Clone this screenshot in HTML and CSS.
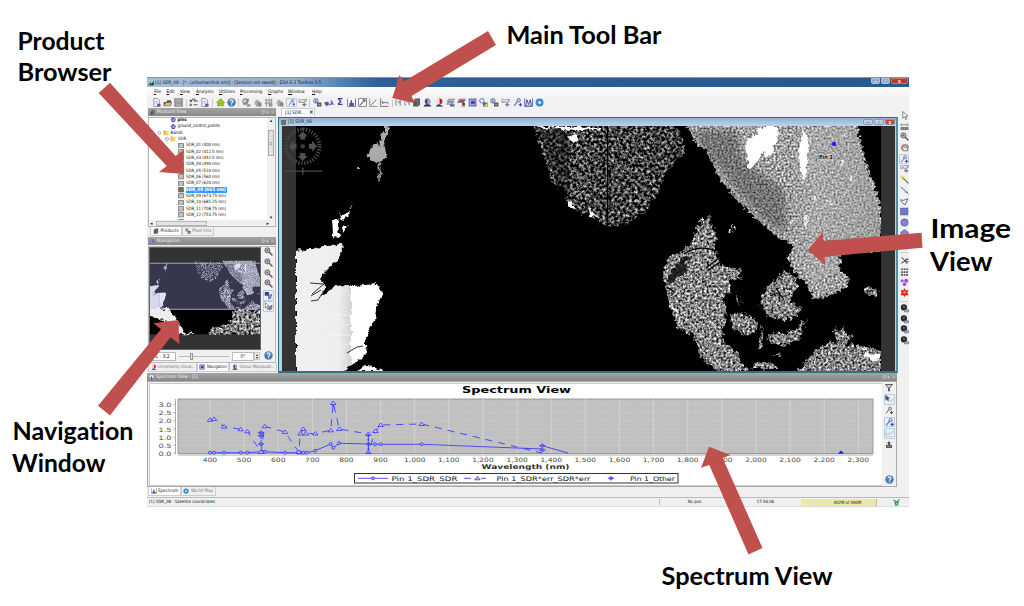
FILE: index.html
```html
<!DOCTYPE html>
<html lang="en">
<head>
<meta charset="utf-8">
<title>ESA S-3 Toolbox overview</title>
<link rel="stylesheet" href="styles.css">
</head>
<body>
<svg class="defs" aria-hidden="true">
  <defs>
    <filter id="speckle" x="0" y="0" width="100%" height="100%" color-interpolation-filters="sRGB">
      <feTurbulence type="fractalNoise" baseFrequency=".42" numOctaves="2" seed="4" result="n"/>
      <feColorMatrix in="n" values="1.7 0 0 0 -.33  1.7 0 0 0 -.33  1.7 0 0 0 -.33  0 0 0 0 1" result="g"/>
      <feTurbulence type="fractalNoise" baseFrequency=".22" numOctaves="3" seed="9" result="d"/>
      <feDisplacementMap in="SourceGraphic" in2="d" scale="9" xChannelSelector="R" yChannelSelector="G" result="s"/>
      <feComposite in="g" in2="s" operator="in"/>
    </filter>
    <filter id="bright" x="0" y="0" width="100%" height="100%" color-interpolation-filters="sRGB">
      <feTurbulence type="fractalNoise" baseFrequency=".5" numOctaves="2" seed="12" result="n"/>
      <feColorMatrix in="n" values="1.3 0 0 0 -.02  1.3 0 0 0 -.02  1.3 0 0 0 -.02  0 0 0 0 1" result="g"/>
      <feTurbulence type="fractalNoise" baseFrequency=".25" numOctaves="3" seed="5" result="d"/>
      <feDisplacementMap in="SourceGraphic" in2="d" scale="8" xChannelSelector="R" yChannelSelector="G" result="s"/>
      <feComposite in="g" in2="s" operator="in"/>
    </filter>
    <filter id="dim" x="0" y="0" width="100%" height="100%" color-interpolation-filters="sRGB">
      <feTurbulence type="fractalNoise" baseFrequency=".34" numOctaves="3" seed="21" result="n"/>
      <feColorMatrix in="n" values="1.9 0 0 0 -.7  1.9 0 0 0 -.7  1.9 0 0 0 -.7  0 0 0 0 1" result="g"/>
      <feTurbulence type="fractalNoise" baseFrequency=".2" numOctaves="3" seed="7" result="d"/>
      <feDisplacementMap in="SourceGraphic" in2="d" scale="9" xChannelSelector="R" yChannelSelector="G" result="s"/>
      <feComposite in="g" in2="s" operator="in"/>
    </filter>
    <filter id="rough" x="-5%" y="-5%" width="110%" height="110%">
      <feTurbulence type="fractalNoise" baseFrequency=".2" numOctaves="3" seed="3" result="d"/>
      <feDisplacementMap in="SourceGraphic" in2="d" scale="6" xChannelSelector="R" yChannelSelector="G"/>
    </filter>
    <filter id="soft" x="-20%" y="-20%" width="140%" height="140%"><feGaussianBlur stdDeviation="3"/></filter>
    <linearGradient id="ukFill"><stop offset="0" stop-color="#f0f0f0"/><stop offset=".5" stop-color="#eee"/><stop offset=".64" stop-color="#d4d4d4"/><stop offset=".645" stop-color="#fff"/><stop offset="1" stop-color="#fff"/></linearGradient>
    <linearGradient id="eastFade" x1="0" x2="1" y1="0" y2="0"><stop offset="0" stop-color="#999" stop-opacity="0"/><stop offset=".3" stop-color="#bbb" stop-opacity=".35"/><stop offset="1" stop-color="#999" stop-opacity=".45"/></linearGradient>

    <g id="map">
      <rect x="296" y="126" width="585" height="245" fill="#000"/>
      <g filter="url(#rough)">
        <path fill="url(#ukFill)" d="M296 250l5-1 4 3 2-3 6 0 10-3 7 1 12-5 1 10-8 10-9 8-6 9 6 7-4 11 11-10 19-1 25-2 5 10-4 10-3 17-7 10-3 11 2 10-9 9-11 7-2 5h-49z"/>
        <path fill="#fff" d="M331 220l6-1 2 9-2 3 4 4-1 3-6-1-2-5zM342 228l7-4-6 9zM338 208l3 8 8-4 5-8-5 10-7 7zM358 371l8-6 18 6z"/>
        <path fill="#aaa" d="M367 157l6-14 3 0 2-3 1 9 3-18 3 1 0-7 4 2-2 9-3 6 3 16-4 1-5 5z"/>
        <path fill="#999" d="M378 160l2 0 1 18-2 3z"/>
        <circle cx="358" cy="168" r="1" fill="#ddd"/>
      </g>
      <g fill="none" stroke="#000"><path d="M310 283l14 1-12 10M311 301l7-1 5-8M311 296l10-6M347 353l10-6 6-1" stroke-width=".8"/></g>
      <g stroke="#fff" stroke-width=".6" opacity=".8"><path d="M299 333l14-27M331 315h20M340 325h18M325 335h30M335 344h20"/></g>
      <g filter="url(#dim)">
        <path d="M531 120L541 148 552 182 565 190 566 203 577 212 592 215 602 226 616 227 632 221 646 211 657 195 667 172 677 158 685 152 683 140 672 120z"/>
      </g>
      <path d="M536 127h40l-8 30 2 40-12-12-12-32z" fill="#000" opacity=".35"/>
      <g filter="url(#rough)" fill="#fff"><path d="M537 127h65v4l-6-2-15 1-6 1-10-1-5-2-18 1zM567 138l8-4 3 5-5 3zM568 202l8 4-2 3-6-3zM587 208l5 2 5 7-6-1z"/></g>
      <path d="M607.500 127v98" stroke="#000" stroke-width="1.300"/>
      <path d="M575 152l8 7m-5 22l12-10m-7 24l8-10m-14 8l12-14m-6-26l5 5m35-8l8 12m-5 5l6 7m-20 12l10-11m-5 25l9-5m-13-42l4 11" stroke="#ccc" stroke-width=".6" opacity=".8" fill="none"/>
      <g filter="url(#bright)">
        <path d="M681 116L697 145 707 152 717 175 730 192 747 210 763 225 780 238 794 247 787 258 797 275 810 288 813 299 828 296 847 288 849 278 840 272 841 254 881 252 881 205 873 182 865 158 858 130 857 116z"/>
      </g>
      <path fill="url(#eastFade)" d="M790 127h64l8 31 8 24 8 23v42l-40 6-2 18-26 12-23-38z"/>
      <path d="M692 130l44 0 8 30 40 30 4 40-14 0-30-30-24-32-18-20z" fill="#222" opacity=".35" filter="url(#soft)"/>
      <g filter="url(#rough)" fill="#fff">
        <path d="M754 127h25l-2 14-7 15-5 2-1-9-9 15-7 6 0-10-2-14 2-8 10-4zM803 130l4 4 1 12-2 28-3 7-3-12-1-20z"/>
        <path d="M805 215l3 0-1 14-2-2zM814 195l2 4-2 5zM829 200l4 3-3 2zM840 160l5 2-4 3zM850 175l4 4-5 1zM790 220l3 4-3 1zM842 133l5 2-4 2z" opacity=".8"/>
      </g>
      <g filter="url(#speckle)">
        <path d="M712 213L697 225 693 242 687 248 668 258 663 272 665 288 670 305 677 328 693 335 697 348 703 360 717 371 730 371 747 371 737 353 724 342 722 328 727 315 723 297 730 292 730 280 740 278 741 268 730 268 720 263 715 248 716 232 709 222z"/>
        <path d="M730 315l12-3 16 10-2 11-13 2-10-6zM785 271l10 6 3 11-6 7 0 7 9 5-4 8-8 4-21-1-5-10-4-7 7-13 10-9zM768 333l18 0 9-5 12-9-6 12-3 11-14 4-15-4zM761 326l2 1-1 21-3 0zM864 287l15 4-1 6-11-3zM834 327l5 6 4-8 3 9 7 2-5 5-7 5-7-9zM735 290l4 8 3 6-4-2zM773 353l9 2-3 3zM728 228l7-2-4 7zM750 369l8-8 14 2 8 6z"/>
        <path d="M798 371L807 359 817 350 830 341 843 345 860 345 881 352V376H798z"/>
      </g>
      <path d="M676 264l10-9 6 3-8 6 4 8-11 5-5 6-6-2z" fill="#000" opacity=".75" filter="url(#rough)"/>
      <path d="M684 254c12-8 22-7 32-3M706 268l13-10m-11 12l14-9M741 330l5 8m30-50l8 12m-14-4l8-3M667 287l7 5" fill="none" stroke="#000" stroke-width="1.200"/>
      <path fill="#fff" d="M864 352l14 3 2-2v6l-7 2-9-5zM672 305l5 5 1 5-4-2zM860 346l9 4-7 0z" filter="url(#rough)"/>
      <circle cx="834" cy="144" r="2.300" fill="#2323e6"/><path d="M830 148l3-3" stroke="#77a" stroke-width=".8"/>
    </g>

    <symbol id="doc" viewBox="0 0 16 16"><path d="M3 1h7l3 3v11H3z" fill="#f4f4ff" stroke="#55589a"/><path d="M5 6h5M5 9h5" stroke="#88a"/><path d="M9 10h6v5H9z" fill="#575aa8"/></symbol>
    <symbol id="open" viewBox="0 0 16 16"><path d="M1 13V7h5l1-3h7v9z" fill="#555"/><path d="M1 14l4-6h11l-3 6z" fill="#d9bd8a" stroke="#555"/></symbol>
    <symbol id="disk" viewBox="0 0 16 16"><path d="M1 1h14v14H1z" fill="#9a9a9a" stroke="#777"/><path d="M4 1h8v6H4zM4 10h8v5H4z" fill="#aaa"/></symbol>
    <symbol id="checks" viewBox="0 0 16 16"><path d="M1 3h4v4H1zM1 10h4v4H1z" fill="#777"/><path d="M2 4l2 2 3-5" stroke="#333" stroke-width="1.500" fill="none"/><path d="M8 5h7M8 12h7M8 2h3" stroke="#555" stroke-width="2"/></symbol>
    <symbol id="home" viewBox="0 0 16 16"><path d="M8 1l7 7-2 1v5h-4v-4H7v4H3V9L1 8z" fill="#9bc516" stroke="#6f9610"/></symbol>
    <symbol id="help" viewBox="0 0 16 16"><circle cx="8" cy="8" r="7.500" fill="#4b7db5"/><path d="M5.500 6c0-4 5.500-3 5 0-.3 2-2.500 1.500-2.500 4M8 11.500v2" stroke="#fff" stroke-width="2" fill="none"/></symbol>
    <symbol id="eye" viewBox="0 0 16 16"><circle cx="6" cy="6" r="4.500" fill="#ddd" stroke="#888" stroke-width="2"/><path d="M3 12L12 2" stroke="#777" stroke-width="2"/><path d="M8 11h7v4H8z" fill="#8890b8"/></symbol>
    <symbol id="greyland" viewBox="0 0 16 16"><path d="M2 9l5-7 3 4 4 1v7l-8 1z" fill="#999"/><path d="M4 8l8 6M2 5h11M5 2v12" stroke="#ccc"/><path d="M9 9h6v6H9z" fill="#888"/></symbol>
    <symbol id="gridi" viewBox="0 0 16 16"><path d="M1 4h14M1 9h14M4 1v14M9 1v14M13 1v14" stroke="#999" stroke-width="2"/><path d="M9 10h6v5H9z" fill="#999"/></symbol>
    <symbol id="pin" viewBox="0 0 16 16"><circle cx="10" cy="4" r="3" fill="#c7cbee" stroke="#6066a5" stroke-width="1.500"/><path d="M8 6L2 14" stroke="#666ba0" stroke-width="2"/><path d="M10 12h6M13 9v6" stroke="#3d3fa0" stroke-width="2"/></symbol>
    <symbol id="gcp" viewBox="0 0 16 16"><text x="0" y="8" font-size="8" font-family="Liberation Sans" fill="#555" textLength="16">GCP</text><path d="M7 12h8M11 9v6" stroke="#65689d" stroke-width="2"/></symbol>
    <symbol id="info" viewBox="0 0 16 16"><circle cx="5" cy="5" r="4" fill="#e4e9ff" stroke="#4c60a4" stroke-width="1.500"/><path d="M5 3v5" stroke="#226" stroke-width="1.500"/><path d="M7 8h8v7H7z" fill="#555"/><path d="M9 10h4v3H9z" fill="#aaa"/></symbol>
    <symbol id="infoy" viewBox="0 0 16 16"><circle cx="5" cy="5" r="4" fill="#e4e9ff" stroke="#4c60a4" stroke-width="1.500"/><path d="M7 8h8v7H7z" fill="#465"/><path d="M8 14l6-5v5z" fill="#ffdf20"/></symbol>
    <symbol id="hist" viewBox="0 0 16 16"><path d="M1 1v14h14V1" fill="#fff" stroke="#666" stroke-width="1.500"/><path d="M4 14V9h2V4h3v5h3v5z" fill="#4c4cac"/></symbol>
    <symbol id="scatter" viewBox="0 0 16 16"><path d="M1 1h14v14H1z" fill="#fff" stroke="#777" stroke-width="1.500"/><path d="M3 13l9-10M8 3h4v4" stroke="#667" stroke-width="2" fill="none"/></symbol>
    <symbol id="line" viewBox="0 0 16 16"><path d="M1 1v14h14" fill="none" stroke="#888" stroke-width="1.500"/><path d="M3 13l10-10" stroke="#55a" stroke-width="1.500"/></symbol>
    <symbol id="wave" viewBox="0 0 16 16"><path d="M1 1v14h14" fill="none" stroke="#666" stroke-width="1.500"/><path d="M3 5l2 5 2-3 3 2 2-2 3 4" stroke="#55a" stroke-width="1.500" fill="none"/></symbol>
    <symbol id="brack" viewBox="0 0 16 16"><path d="M5 2H2v12h3M11 2h3v12h-3M5 8l6-3v6" stroke="#777" stroke-width="1.800" fill="none"/></symbol>
    <symbol id="db" viewBox="0 0 16 16"><path d="M2 4l4-3h8v11l-3 3H2z" fill="#555"/><path d="M2 4h8v11" stroke="#aaa" fill="none"/></symbol>
    <symbol id="person" viewBox="0 0 16 16"><circle cx="8" cy="6" r="5" fill="#4a4aa4"/><path d="M8 1a5 5 0 010 10z" fill="#aab"/><path d="M1 15q1-4 5-4l5 0 4 4z" fill="#334"/></symbol>
    <symbol id="personr" viewBox="0 0 16 16"><circle cx="8" cy="6" r="5" fill="#d11"/><path d="M8 1a5 5 0 000 10z" fill="#eef"/><path d="M1 15q2-4 7-4l7 4z" fill="#335"/></symbol>
    <symbol id="layers" viewBox="0 0 16 16"><path d="M5 2h10l-3 4H2zM4 7h10l-3 4H1z" fill="#b6bbdc" stroke="#557"/><path d="M7 11h8v4H7z" fill="#667"/></symbol>
    <symbol id="layersr" viewBox="0 0 16 16"><path d="M4 2h11l-3 6H1z" fill="#aab" stroke="#446"/><path d="M5 4h7v3H4z" fill="#d22"/><path d="M9 9h5v6H9z" fill="#444"/><path d="M7 14h8" stroke="#da6" stroke-width="2"/></symbol>
    <symbol id="sq" viewBox="0 0 16 16"><path d="M2 2h12v12H2z" fill="#b5b9e2" stroke="#6569b0" stroke-width="2"/><path d="M5 5h7v6H5z" fill="#44499b"/></symbol>
    <symbol id="spec" viewBox="0 0 16 16"><path d="M1 1v14h14V1" fill="#eef" stroke="#555aa8" stroke-width="1.500"/><path d="M3 12l2-9 3 9 3-9 2 9" fill="none" stroke="#33a" stroke-width="1.500"/><path d="M2 13h4" stroke="#e33" stroke-width="2"/><path d="M6 13h4" stroke="#ec1" stroke-width="2"/><path d="M10 13h4" stroke="#3a4" stroke-width="2"/></symbol>
    <symbol id="globe" viewBox="0 0 16 16"><circle cx="8" cy="8" r="7" fill="#3e86cf"/><circle cx="8" cy="8" r="3" fill="#b6e0ee"/></symbol>
    <symbol id="cursor" viewBox="0 0 16 16"><path d="M5 1v12l3-3 2 5 2-1-2-5h4z" fill="#fff" stroke="#333"/></symbol>
    <symbol id="scale" viewBox="0 0 16 16"><path d="M3 5h10M4 3L1 5l3 2M12 3l3 2-3 2" stroke="#444" fill="none"/><path d="M1 9h14v5H1z" fill="#666"/><path d="M3 11h2M7 11h2M11 11h2" stroke="#fff"/></symbol>
    <symbol id="mag" viewBox="0 0 16 16"><circle cx="6" cy="6" r="4.500" fill="#b9bfe2" stroke="#555" stroke-width="1.500"/><path d="M6 4v4M4 6h4" stroke="#338"/><path d="M9 9l6 6" stroke="#75503c" stroke-width="2.500"/></symbol>
    <symbol id="hand" viewBox="0 0 16 16"><path d="M3 6l2-3 2 1 2-2 2 2 2-1 2 4-2 7H6L2 9z" fill="#b8a898" stroke="#444"/><path d="M6 9h6v4H7z" fill="#eee"/></symbol>
    <symbol id="wand" viewBox="0 0 16 16"><path d="M5 5l10 10" stroke="#666" stroke-width="2"/><path d="M4 1v7M1 4h7" stroke="#e6cf2e" stroke-width="2"/></symbol>
    <symbol id="diag" viewBox="0 0 16 16"><path d="M2 2l13 12" stroke="#4b4b9f" stroke-width="1.600"/><path d="M9 11h5" stroke="#4b4b9f"/></symbol>
    <symbol id="pline" viewBox="0 0 16 16"><path d="M1 5l5 1 8-3-5 11-5-4z" fill="#fff" stroke="#4b4b9f" stroke-width="1.500"/></symbol>
    <symbol id="rect" viewBox="0 0 16 16"><path d="M1 2h13v12H1z" fill="#7476c8" stroke="#4547a4"/></symbol>
    <symbol id="ell" viewBox="0 0 16 16"><circle cx="8" cy="8" r="6.500" fill="#8486d0" stroke="#4547a4"/></symbol>
    <symbol id="poly" viewBox="0 0 16 16"><path d="M8 1l7 5-3 9H4L1 6z" fill="#8486d0" stroke="#4547a4"/></symbol>
    <symbol id="cut" viewBox="0 0 16 16"><path d="M3 2l10 12M14 5L2 13" stroke="#334" stroke-width="1.700"/><path d="M9 6h6M9 10h6" stroke="#c33" stroke-width="2"/></symbol>
    <symbol id="mat" viewBox="0 0 16 16"><path d="M2 4h12M2 9h12M2 14h12" stroke="#444" stroke-width="3" stroke-dasharray="3 1.500"/></symbol>
    <symbol id="blobs" viewBox="0 0 16 16"><circle cx="4" cy="5" r="3" fill="#96d"/><circle cx="11" cy="5" r="3.500" fill="#a4d"/><circle cx="8" cy="11" r="3" fill="#75d"/></symbol>
    <symbol id="star" viewBox="0 0 16 16"><path d="M8 0l2 4 5 0-2 4 2 5-5 0-2 3-2-3-5 0 2-5-2-4 5 0z" fill="#d92020"/><circle cx="8" cy="8" r="2.500" fill="#f90"/></symbol>
    <symbol id="ball" viewBox="0 0 16 16"><circle cx="7" cy="6" r="5.500" fill="#272727"/><circle cx="7" cy="5" r="1.500" fill="#999"/><path d="M8 10h7v4H8z" fill="#9caed8" stroke="#557"/></symbol>
    <symbol id="filter" viewBox="0 0 16 16"><path d="M1 2h14L9 9v6H7V9z" fill="#ccd" stroke="#334" stroke-width="1.500"/></symbol>
    <symbol id="sync" viewBox="0 0 16 16"><path d="M1 2h8v7H1z" fill="#447"/><path d="M8 9l6-3-2 8-4 1z" fill="#88c" stroke="#446"/></symbol>
    <symbol id="cursync" viewBox="0 0 16 16"><path d="M2 1v10l2-2 2 5 2-1-2-5h3z" fill="#fff" stroke="#333"/><path d="M9 9l6-3-2 8-4 1z" fill="#88c" stroke="#446"/></symbol>
    <symbol id="curline" viewBox="0 0 16 16"><path d="M1 1v8l2-2 2 4 1-1-1-4h3z" fill="#556" stroke="#333"/><path d="M6 13l4-3 2 2 3-6" fill="none" stroke="#88c"/></symbol>
    <symbol id="plot" viewBox="0 0 16 16"><path d="M1 2v12h14" fill="none" stroke="#aab"/><path d="M2 11l4-3 3 2 6-6" fill="none" stroke="#88c" stroke-width="1.200"/></symbol>
    <symbol id="export" viewBox="0 0 16 16"><path d="M8 1l4 5h-2v4H6V6H4zM2 9h12v6H2z" fill="#555"/><path d="M4 12h8" stroke="#ccc"/></symbol>
    <symbol id="node" viewBox="0 0 16 16"><path d="M1 8h5M8 1v14" stroke="#33a" stroke-width="2"/><path d="M5 3h7l3 5-3 5H5z" fill="#aae" stroke="#33a" stroke-width="2.500"/></symbol>
    <symbol id="folder" viewBox="0 0 16 16"><path d="M1 2h6l1 2h6v11H1z" fill="#f4c842" stroke="#c9972a"/><path d="M9 5h4v9H9z" fill="#fae59a"/></symbol>
    <symbol id="band" viewBox="0 0 16 16"><path d="M1 1h14v14H1z" fill="#c5c5c5" stroke="#555" stroke-width="2"/></symbol>
    <symbol id="bandon" viewBox="0 0 16 16"><path d="M1 1h14v14H1z" fill="#77704a" stroke="#555" stroke-width="2"/></symbol>
    <symbol id="wctl" viewBox="0 0 48 16"><path d="M3 3h7v9H3zM6 1h7v8" fill="none" stroke="#ddd" stroke-width="1.500"/><path d="M22 3v10M18 6h8M18 9h8" stroke="#ddd" stroke-width="1.500"/><path d="M36 3l9 9m0-9l-9 9" stroke="#ddd" stroke-width="1.500"/></symbol>
  </defs>
</svg>

<main class="page">
  <section class="app">
    <header class="titlebar">
      <svg class="logo" viewBox="0 0 16 16"><path d="M0 14L7 6l2 4 6-9v13z" fill="#123"/><path d="M1 14l8-4 5-7" stroke="#bde" stroke-width="1.500" fill="none"/></svg>
      <span class="title-text">[1] SDR_08 - [*...\xfdumanifest.xml] - [Session not saved] - ESA S-3 Toolbox 0.5</span>
      <span class="winbtns"><i>–</i><i>▫</i><i class="close">x</i></span>
    </header>
    <nav class="menu"><span><u>F</u>ile</span><span><u>E</u>dit</span><span><u>V</u>iew</span><span><u>A</u>nalysis</span><span><u>U</u>tilities</span><span><u>P</u>rocessing</span><span><u>G</u>raphs</span><span><u>W</u>indow</span><span><u>H</u>elp</span></nav>
    <div class="toolbar">
      <svg><use href="#doc"/></svg><svg><use href="#open"/></svg><svg><use href="#disk"/></svg><b></b>
      <svg><use href="#checks"/></svg><svg><use href="#doc"/></svg><b></b>
      <svg><use href="#home"/></svg><svg><use href="#help"/></svg><b></b>
      <svg><use href="#eye"/></svg><svg><use href="#greyland"/></svg><svg><use href="#gridi"/></svg><svg><use href="#greyland"/></svg><svg class="pressed"><use href="#pin"/></svg><svg><use href="#gcp"/></svg><b></b>
      <svg><use href="#info"/></svg><span class="glyph">φ,λ</span><span class="glyph sigma">Σ</span><svg><use href="#hist"/></svg><svg><use href="#scatter"/></svg><svg><use href="#line"/></svg><svg><use href="#wave"/></svg><b></b>
      <svg class="narrow"><use href="#brack"/></svg><svg class="narrow"><use href="#brack"/></svg><svg><use href="#db"/></svg><svg><use href="#person"/></svg><svg><use href="#personr"/></svg><svg><use href="#layers"/></svg><svg><use href="#layersr"/></svg><svg><use href="#sq"/></svg><svg><use href="#infoy"/></svg><svg><use href="#info"/></svg><svg><use href="#gcp"/></svg><svg><use href="#pin"/></svg><svg><use href="#spec"/></svg><svg><use href="#globe"/></svg>
    </div>

    <div class="workspace">
      <div class="docks">
        <div class="upper">
          <aside class="left">
            <div class="panel-title"><svg><use href="#db"/></svg><span>Products View</span><svg class="ctl"><use href="#wctl"/></svg></div>
            <div class="tree-pane">
              <div class="tree-scroll">
                <ul class="tree">
                  <li class="l2"><svg><use href="#node"/></svg><strong>pins</strong></li>
                  <li class="l2"><svg><use href="#node"/></svg><span>ground_control_points</span></li>
                  <li class="l1"><em></em><svg><use href="#folder"/></svg><span>Bands</span></li>
                  <li class="l15"><em></em><svg><use href="#folder"/></svg><span>SDR</span></li>
                  <li class="l3"><svg><use href="#band"/></svg><span>SDR_01 (400 nm)</span></li>
                  <li class="l3"><svg><use href="#band"/></svg><span>SDR_02 (412.5 nm)</span></li>
                  <li class="l3"><svg><use href="#band"/></svg><span>SDR_03 (442.5 nm)</span></li>
                  <li class="l3"><svg><use href="#band"/></svg><span>SDR_04 (490 nm)</span></li>
                  <li class="l3"><svg><use href="#band"/></svg><span>SDR_05 (510 nm)</span></li>
                  <li class="l3"><svg><use href="#band"/></svg><span>SDR_06 (560 nm)</span></li>
                  <li class="l3"><svg><use href="#band"/></svg><span>SDR_07 (620 nm)</span></li>
                  <li class="l3"><svg><use href="#bandon"/></svg><span class="selected">SDR_08 (665 nm)</span></li>
                  <li class="l3"><svg><use href="#band"/></svg><span>SDR_09 (673.75 nm)</span></li>
                  <li class="l3"><svg><use href="#band"/></svg><span>SDR_10 (681.25 nm)</span></li>
                  <li class="l3"><svg><use href="#band"/></svg><span>SDR_11 (708.75 nm)</span></li>
                  <li class="l3"><svg><use href="#band"/></svg><span>SDR_12 (753.75 nm)</span></li>
                  <li class="l3"><svg><use href="#band"/></svg></li>
                </ul>
                <div class="vbar"><small>▴</small><i>≡</i><small class="down">▾</small></div>
              </div>
              <div class="hbar"><small>◂</small><i></i><small class="end">▸</small></div>
            </div>
            <div class="tabs product-tabs"><span class="tab on"><svg><use href="#db"/></svg>Products</span><span class="tab"><svg><use href="#info"/></svg>Pixel Info</span></div>
            <div class="panel-title"><svg><use href="#sq"/></svg><span>Navigation</span><svg class="ctl"><use href="#wctl"/></svg></div>
            <div class="nav-body">
              <div class="nav-main">
                <svg class="nav-map" viewBox="149 247 112 103" preserveAspectRatio="none">
                  <rect x="149" y="247" width="112" height="103" fill="#333"/>
                  <rect x="149" y="262" width="112" height="73" fill="#000"/>
                  <use href="#map" transform="translate(92.300 237.900) scale(.1915)"/>
                  <rect x="149" y="262" width="112" height="47.500" fill="#a4a4e6" opacity=".33"/>
                  <path d="M149 262.500h112M149 309.500h112" stroke="#aaaad4"/>
                  <g filter="url(#rough)"><path d="M149 309h19l8 10 7 14 4 2h-7l-10-13-21-5z" fill="#eee"/><path d="M186 334l4-2 3 3h-6z" fill="#ddd"/></g>
                  <path d="M232 310h29v25h-52l5-7 14-3 6-6z" filter="url(#speckle)"/>
                </svg>
                <div class="zoomrow"><span class="field">1 : 3.2</span><span class="slider"><i></i></span><span class="field deg">0°</span><span class="spin"><i>▴</i><i>▾</i></span></div>
              </div>
              <div class="nav-tools"><svg><use href="#mag"/></svg><svg><use href="#mag"/></svg><svg><use href="#mag"/></svg><svg><use href="#mag"/></svg><svg class="pressed"><use href="#sync"/></svg><svg class="pressed"><use href="#cursync"/></svg><svg class="helpbtn"><use href="#help"/></svg></div>
            </div>
            <div class="tabs nav-tabs"><span class="tab"><svg><use href="#personr"/></svg>Uncertainty Visua...</span><span class="tab on"><svg><use href="#sq"/></svg>Navigation</span><span class="tab"><svg><use href="#person"/></svg>Colour Manipulat...</span></div>
          </aside>

          <section class="center">
            <div class="doc-tabs"><span>[1] SDR... &nbsp; <b>×</b></span></div>
            <div class="frame">
              <div class="frame-title"><svg><use href="#bandon"/></svg><span>[1] SDR_08</span><span class="winbtns light"><i>–</i><i>▫</i><i class="close">x</i></span></div>
              <svg class="map" viewBox="282 126 613 245" preserveAspectRatio="none">
                <rect x="282" y="126" width="613" height="245" fill="#333"/>
                <use href="#map"/>
                <text x="819" y="158.500" class="pin-label" textLength="14">Pin 1</text>
                <g fill="#3d3d3d">
                  <circle cx="302.700" cy="146.300" r="16.800" fill="none" stroke="#484848" stroke-width="4" stroke-dasharray="1.300 1.630"/>
                  <circle cx="302.700" cy="146.300" r="2.300"/>
                  <path fill="#505050" d="M302.700 131.500l5 5h-2.500v3h-5v-3h-2.500zM302.700 161l5-5h-2.500v-3h-5v3h-2.500zM288.500 146.300l5-5.500v3h3v5h-3v3zM317 146.300l-5-5.500v3h-3v5h3v3z"/>
                  <path d="M284 170.500h38v1.200h-38zM302 167.500h1.500v7H302z" fill="#4a4a4a"/>
                  <path d="M302.700 127.500v3" stroke="#7b6414"/>
                </g>
              </svg>
            </div>
          </section>
        </div>

        <section class="spectrum">
          <div class="panel-title"><svg><use href="#hist"/></svg><span>Spectrum View - [1]</span><svg class="ctl"><use href="#wctl"/></svg></div>
          <div class="spectrum-body">
            <svg class="chart" viewBox="150 384 732 101" preserveAspectRatio="none">
              <rect x="150" y="384" width="732" height="101" fill="#fff"/>
              <rect x="178" y="399" width="695" height="54.500" fill="#c0c0c0" stroke="#888" stroke-width=".8"/>
              <path d="M178 404.700h695M178 412.800h695M178 420.900h695M178 429h695M178 437.200h695M178 445.300h695" stroke="#d8d8d8" stroke-width=".6" stroke-dasharray="2 1.400"/>
              <path d="M210 399v54M244.100 399v54M278.200 399v54M312.400 399v54M346.500 399v54M380.600 399v54M414.700 399v54M448.800 399v54M483 399v54M517.100 399v54M551.200 399v54M585.300 399v54M619.400 399v54M653.600 399v54M687.700 399v54M721.800 399v54M755.900 399v54M790 399v54M824.200 399v54M858.300 399v54" stroke="#d8d8d8" stroke-width=".8"/>
              <path d="M175.500 399v55M173.500 404.700h2M173.500 412.800h2M173.500 420.900h2M173.500 429h2M173.500 437.200h2M173.500 445.300h2M173.500 453.400h2M178 455h695" stroke="#999" stroke-width=".8"/>
              <g class="ticks ty">
                <text x="158.500" y="407.200" textLength="13">3.0</text><text x="158.500" y="415.300" textLength="13">2.5</text><text x="158.500" y="423.400" textLength="13">2.0</text><text x="158.500" y="431.500" textLength="13">1.5</text><text x="158.500" y="439.600" textLength="13">1.0</text><text x="158.500" y="447.700" textLength="13">0.5</text><text x="158.500" y="455.800" textLength="13">0.0</text>
              </g>
              <g class="ticks">
                <text x="202.700" y="461.800" textLength="14.500">400</text><text x="236.800" y="461.800" textLength="14.500">500</text><text x="271" y="461.800" textLength="14.500">600</text><text x="305.100" y="461.800" textLength="14.500">700</text><text x="339.200" y="461.800" textLength="14.500">800</text><text x="373.300" y="461.800" textLength="14.500">900</text>
                <text x="404" y="461.800" textLength="21.500">1,000</text><text x="438.100" y="461.800" textLength="21.500">1,100</text><text x="472.200" y="461.800" textLength="21.500">1,200</text><text x="506.400" y="461.800" textLength="21.500">1,300</text><text x="540.500" y="461.800" textLength="21.500">1,400</text><text x="574.600" y="461.800" textLength="21.500">1,500</text><text x="608.700" y="461.800" textLength="21.500">1,600</text><text x="642.800" y="461.800" textLength="21.500">1,700</text><text x="677" y="461.800" textLength="21.500">1,800</text><text x="711.100" y="461.800" textLength="21.500">1,900</text><text x="745.200" y="461.800" textLength="21.500">2,000</text><text x="779.300" y="461.800" textLength="21.500">2,100</text><text x="813.400" y="461.800" textLength="21.500">2,200</text><text x="847.600" y="461.800" textLength="21.500">2,300</text>
              </g>
              <text class="chart-title" x="462" y="393.300" textLength="109">Spectrum View</text>
              <text class="axis-title" x="481.500" y="469.300" textLength="88">Wavelength (nm)</text>
              <defs>
                <marker id="mc" markerWidth="6" markerHeight="6" refX="3" refY="3" markerUnits="userSpaceOnUse"><circle cx="3" cy="3" r="1.500" fill="#a9a9ee" stroke="#33f" stroke-width=".8"/></marker>
                <marker id="mt" markerWidth="8" markerHeight="7" refX="4" refY="3.500" markerUnits="userSpaceOnUse"><path d="M4 1.500L6.700 5H1.300z" fill="#c8c8ee" stroke="#33f" stroke-width=".8"/></marker>
                <marker id="md" markerWidth="10" markerHeight="7" refX="5" refY="3.500" markerUnits="userSpaceOnUse"><path d="M5 1.500L7.200 3.500 5 5.500 2.800 3.500zM1.800 3.500h6.400" fill="#88f" stroke="#33f" stroke-width=".7"/></marker>
              </defs>
              <g fill="none" stroke="#3c3cff" stroke-width=".9">
                <path marker-start="url(#mc)" marker-mid="url(#mc)" d="M210 452.700L214 452.700 224 452.700 240.700 452.700 247.300 452.700 262 451.700 265 451.700 285 452.700 298 452.700 301 452.700 303.500 452.700 306.700 452.700 315 450.700 330.700 444 333.300 447.700 339 443.300 368.300 444 375 444.300 380.700 444.300 421.700 444.300 542.300 449"/>
                <path stroke-dasharray="7 6" marker-start="url(#mt)" marker-mid="url(#mt)" d="M210 419.800L214 419 224 426.700 240.700 429.300 247.300 431.300 261 452 264.700 426.300 285 432 298.700 452 300.500 433.500 303.300 429 306 433.500 315.300 433.500 330.700 430.300 333.300 403 339.300 429 368.300 434 368.500 452 375.500 431 380.700 425 421.700 424 542 453"/>
                <path stroke-dasharray="1.500 1" marker-start="url(#md)" marker-mid="url(#md)" marker-end="url(#md)" d="M261 432.700V435.700V444"/>
                <path marker-start="url(#md)" d="M542.300 445.700L568 453"/>
                <path marker-start="url(#md)" d="M542.300 450v2M368.300 444v.1M333.300 403v.1" stroke-width="1"/>
                <path d="M368.400 434v19M333 404v4" stroke-dasharray="3 1.500" stroke-width="1.400"/>
              </g>
              <path d="M838 453.500l3-3 3 3z" fill="#11f"/>
              <rect x="354.500" y="473.500" width="323.500" height="9.500" fill="#fff" stroke="#333"/>
              <g fill="none" stroke="#3c3cff" stroke-width=".9"><path marker-mid="url(#mc)" d="M358 478.300H373H388"/><path stroke-dasharray="7 10" marker-mid="url(#mt)" d="M464 478.300H477.500H486"/><path marker-mid="url(#md)" d="M610 478.300H611H612"/></g>
              <g class="legend"><text x="391.500" y="480.500" textLength="66">Pin 1_SDR_SDR</text><text x="496.500" y="480.500" textLength="94">Pin 1_SDR*err_SDR*err</text><text x="630" y="480.500" textLength="45">Pin 1_Other</text></g>
            </svg>
            <div class="spectrum-tools"><svg><use href="#filter"/></svg><svg class="pressed"><use href="#curline"/></svg><svg class="grey"><use href="#pin"/></svg><svg class="pressed"><use href="#pin"/></svg><svg class="pressed"><use href="#plot"/></svg><svg><use href="#export"/></svg><svg class="helpbtn"><use href="#help"/></svg></div>
          </div>
          <div class="tabs bottom-tabs"><span class="tab on"><svg><use href="#hist"/></svg>Spectrum</span><span class="tab"><svg><use href="#globe"/></svg>World Map</span></div>
        </section>
      </div>

      <div class="side-tools">
        <svg><use href="#cursor"/></svg><svg><use href="#scale"/></svg><svg><use href="#mag"/></svg><svg><use href="#hand"/></svg><svg class="pressed"><use href="#pin"/></svg><svg><use href="#gcp"/></svg><svg><use href="#wand"/></svg><svg><use href="#diag"/></svg><svg><use href="#pline"/></svg><svg><use href="#rect"/></svg><svg><use href="#ell"/></svg><svg><use href="#poly"/></svg><b></b>
        <svg><use href="#cut"/></svg><svg><use href="#mat"/></svg><svg><use href="#blobs"/></svg><svg><use href="#star"/></svg><b class="short"></b>
        <svg><use href="#ball"/></svg><svg><use href="#ball"/></svg><svg><use href="#ball"/></svg><svg><use href="#ball"/></svg>
      </div>
    </div>

    <footer class="status"><span class="msg">[1] SDR_08 - Satellite coordinates</span><span class="pos">No pos.</span><span class="time">17:56:06</span><span class="mem">402M of 490M</span><span class="trash"><svg viewBox="0 0 16 16"><path d="M3 5h10l-1 10H4z" fill="#2c9b43"/><path d="M1 2l5 3M15 1l-6 5" stroke="#164" stroke-width="2"/><path d="M6 8l4 5m0-5l-4 5" stroke="#fff"/></svg></span></footer>
  </section>

  <svg class="callouts" viewBox="0 0 1024 606">
    <g fill="#c0504d">
      <path d="M110 82.700L175.500 156 183.500 150 184 174 159 172 166.700 166 98.700 93z"/>
      <path d="M488 31L404 81.500 399.500 75 392.300 98 415 103.300 411.500 96 496 45z"/>
      <path d="M807.700 250L822.700 232.300 823.300 241 921.500 232.700 922.500 247.700 824.700 256.700 825.300 265.300z"/>
      <path d="M98 405.700L161 329.300 153.300 323.300 178.500 320 179.300 344 170.500 337.300 110 415.500z"/>
      <path d="M709 446.700L730.500 455 722.700 458 762.500 548 748.500 554.500 709.300 465 701 467.700z"/>
    </g>
    <g class="label">
      <text x="17.500" y="49.500" textLength="87">Product</text><text x="17.500" y="81" textLength="94">Browser</text>
      <text x="506.500" y="44" textLength="155">Main Tool Bar</text>
      <text class="big" x="930.500" y="238" textLength="80.500">Image</text><text class="big" x="930" y="270.500" textLength="62.500">View</text>
      <text x="12.500" y="440" textLength="121">Navigation</text><text x="12" y="472" textLength="93.500">Window</text>
      <text x="661.500" y="585" textLength="171">Spectrum View</text>
    </g>
  </svg>
</main>
<script src="labels.js"></script>
</body>
</html>
```
FILE: styles.css
```css
* { box-sizing: border-box; }
body { margin: 0; background: #fff; }
.page { position: relative; width: 1024px; height: 606px; padding: 77px 0 0 147px; overflow: hidden; }
.defs { position: absolute; width: 0; height: 0; }
svg { display: block; flex: none; }

.app { width: 762px; height: 430px; display: flex; flex-direction: column; background: #f0f0f0; color: #111; font: 4.7px/6px "DejaVu Sans Condensed", "Open Sans", sans-serif; white-space: nowrap; }

.titlebar { height: 10px; display: flex; align-items: center; padding: 0 1px 0 1px; background: linear-gradient(90deg, #a8bfd9 0, #91aed0 150px, #5686b8 190px, #2b609c 230px, #28598f 100%); border-top: 1px solid #8b949e; }
.logo { width: 6px; height: 6px; margin-right: 1px; }
.title-text { font-size: 4.75px; letter-spacing: -.04px; color: #10233b; }
.winbtns { margin-left: auto; display: flex; gap: 1px; align-self: flex-start; }
.winbtns i { width: 9px; height: 6px; border-radius: 0 0 2px 2px; background: #91abc8; border: 1px solid #b6c8da; font: bold 5px/4px sans-serif; color: #fff; text-align: center; }
.winbtns .close { width: 17px; background: #b93b2b; border-color: #c87464; }
.winbtns.light i { width: 10px; background: #bccde1; border-color: #8699b0; height: 6px; color: #456; }
.winbtns.light .close { width: 10px; background: #d2432d; color: #fff; }

.menu { height: 10px; padding: 2px 0 0 7px; display: grid; grid-template-columns: 12.5px 13.5px 16px 23px 21px 28px 20px 24px 20px; font-size: 4.7px; background: linear-gradient(#fcfcfc, #f3f3f3); }
.menu u { text-decoration-thickness: .4px; }

.toolbar { height: 11px; padding-left: 3.500px; display: flex; align-items: center; background: #f1f1f1; }
.toolbar svg, .glyph { width: 11.150px; height: 9px; padding: 0 1px; margin-top: -1px; }
.toolbar .narrow { width: 8.500px; }
.toolbar b { width: 1px; height: 8px; margin: 0 1.600px; background: #ccc; }
.glyph { font: bold 6px/9px "DejaVu Sans", sans-serif; color: #3d409a; text-align: center; padding: 0; letter-spacing: -.5px; }
.sigma { font-size: 9px; }
.pressed { background: #e8f0f8; border: 1px solid #b4cde2; border-radius: 1px; }

.workspace { flex: 1; display: flex; min-height: 0; }
.docks { width: 750px; display: flex; flex-direction: column; }
.upper { height: 266px; display: flex; }
.left { width: 130px; display: flex; flex-direction: column; }

.panel-title { height: 8px; display: flex; align-items: center; gap: 2px; padding: 0 1px 0 2px; background: linear-gradient(#a5a5a5, #868686); color: #ececec; font-size: 4.700px; }
.panel-title svg { width: 5px; height: 5px; }
.panel-title .ctl { width: 14px; margin-left: auto; }
.left .panel-title { margin: 0 1px; }

.tree-pane { margin: 1px 1px 0; height: 110px; border: 1px solid #b5b5b5; background: #fff; display: flex; flex-direction: column; }
.tree-scroll { flex: 1; display: flex; min-height: 0; }
.tree { flex: 1; margin: -1px 0 0; padding: 0; list-style: none; overflow: hidden; height: 103px; background: linear-gradient(90deg, transparent 26.500px, #ddd 26.500px, #ddd 27px, transparent 27px) no-repeat 0 26px; }
.tree li { height: 6.330px; display: flex; align-items: center; gap: 2px; font-size: 4.470px; line-height: 6.300px; letter-spacing: -.1px; }
.tree svg { width: 6px; height: 5.500px; }
.tree em { width: 3.500px; height: 3.500px; border: .5px solid #9ab; border-radius: 2px; background: #fff; margin-right: -.5px; }
.l1 { padding-left: 8.500px; }
.l15 { padding-left: 16px; }
.l2 { padding-left: 20.500px; }
.l3 { padding-left: 29px; }
.selected { background: #3298fc; color: #fff; font-weight: bold; padding: 0 1px 0 0; margin-left: -.5px; font-size: 4.800px; }
.vbar { width: 8px; background: #f0f0f0; display: flex; flex-direction: column; align-items: center; height: 102px; }
.vbar i { width: 6px; height: 26px; margin-top: 7px; border: 1px solid #aaa; background: #e2e2e2; font: 5px/24px sans-serif; text-align: center; color: #777; }
.down { margin-top: auto; }
.hbar { height: 6px; background: #f0f0f0; display: flex; align-items: center; padding: 0 6px 0 1px; gap: 3px; }
.hbar i { width: 51px; height: 5px; border: 1px solid #b5b5b5; background: #e5e5e5; }
.end { margin-left: auto; }
small { font: 5px/5px "DejaVu Sans", sans-serif; color: #333; }

.tabs { height: 10px; display: flex; align-items: flex-start; padding-left: 3px; color: #777; }
.tab { display: flex; align-items: center; gap: 2px; height: 9px; padding: 0 2.500px; border: 1px solid #ccc; border-top: 0; font-size: 4.700px; }
.product-tabs .tab { gap: 1.500px; padding: 0 2px; }
.tab.on { background: #fff; color: #222; }
.tab svg { width: 6px; height: 6px; }
.nav-tabs { padding-left: 1px; letter-spacing: -.1px; }
.nav-tabs .tab { padding: 0 1.500px; gap: 1.500px; font-size: 4.350px; }

.nav-body { height: 117px; margin: 1px 1px 0; border: 1px solid #bbb; display: flex; }
.nav-main { width: 112px; padding-left: 0; }
.nav-map { width: 112px; height: 103px; border: 1px solid #666; }
.zoomrow { display: flex; align-items: center; height: 11px; padding-top: 1px; }
.field { width: 27px; height: 9px; background: #fff; border: 1px solid #bbb; text-align: center; line-height: 7px; font-size: 5px; }
.slider { width: 50px; margin: 0 3px; height: 1px; background: #bbb; display: flex; align-items: center; }
.slider i { width: 3px; height: 7px; margin-left: 11px; background: #ddd; border: 1px solid #999; }
.deg { width: 22px; }
.spin { display: flex; flex-direction: column; width: 6px; border: 1px solid #bcc; font: 4px/3px "DejaVu Sans", sans-serif; text-align: center; }
.nav-tools { flex: 1; display: flex; flex-direction: column; align-items: center; }
.nav-tools svg { width: 9px; height: 9px; margin-bottom: 1.800px; }
.nav-tools .pressed, .spectrum-tools .pressed { width: 11px; height: 10.500px; margin-bottom: .5px; }
.nav-tools .helpbtn { margin-top: auto; margin-bottom: 2px; }

.center { flex: 1; display: flex; flex-direction: column; padding-left: 1px; }
.doc-tabs { height: 8px; padding-left: 3px; background: #f2f2f2; }
.doc-tabs span { display: block; width: 34px; height: 8px; padding: 1px 3px; background: #fff; border: 1px solid #ccc; border-bottom: 0; line-height: 6px; }
.doc-tabs b { font-size: 6px; line-height: 1px; }
.frame { width: 620px; height: 256px; margin-top: 1px; border: 1px solid #35707f; border-right: 2px solid #4b93a3; border-bottom-width: 2px; background: #b5d0ec; padding: 0 1px 0 3px; }
.frame-title { height: 8px; display: flex; align-items: center; gap: 2px; background: linear-gradient(#8fb1d6, #bdd3ec); margin: 0 -1px 0 -3px; padding: 0 1px 0 2px; color: #223; font-size: 4.700px; }
.frame-title svg { width: 5px; height: 5px; }
.frame-title .winbtns { align-self: center; }
.map { width: 613px; height: 245px; }
.pin-label { font: bold 5.500px "DejaVu Sans", sans-serif; fill: #111; stroke: #ddd; stroke-width: 1px; paint-order: stroke; }

.spectrum .panel-title { height: 8px; }
.spectrum-body { height: 106px; border: 1px solid #aaa; display: flex; padding: 1px 1px 0; background: #f0f0f0; }
.chart { width: 733px; height: 103px; border: 1px solid #ccc; border-right: 0; }
.ticks text { font: 6px "DejaVu Sans", sans-serif; fill: #4a4a4a; }
.chart-title { font: bold 8px "DejaVu Sans", sans-serif; fill: #000; }
.axis-title { font: bold 6.500px "DejaVu Sans", sans-serif; fill: #333; }
.legend text { font: 6.200px "DejaVu Sans", sans-serif; fill: #111; }
.spectrum-tools { flex: 1; display: flex; flex-direction: column; align-items: center; padding: 0 0 0 1px; }
.spectrum-tools svg { width: 8px; height: 9px; margin-bottom: 2.200px; }
.spectrum-tools .pressed { margin-bottom: 1px; }
.spectrum-tools .helpbtn { width: 9px; margin-top: auto; margin-bottom: 2px; }
.grey { filter: grayscale(1); }
.bottom-tabs { height: 10px; padding-left: 1px; }
.bottom-tabs .tab { padding: 0 1.500px; gap: 1.500px; }

.side-tools { width: 12px; display: flex; flex-direction: column; align-items: center; padding: 3px 0 0 2px; }
.side-tools svg { width: 9px; height: 9px; margin-bottom: 1.700px; }
.side-tools .pressed { width: 10px; height: 10.700px; margin-bottom: 0; }
.side-tools b { width: 8px; height: 1px; background: #ccc; margin: 13px 0 3px; }
.side-tools .short { margin: 2px 0 2px; }

.status { height: 10px; margin-top: 1px; border-top: 1px solid #bbb; border-bottom: 1px solid #ddd; display: flex; align-items: center; font-size: 4.350px; }
.msg { width: 513px; padding-left: 2px; border-right: 1px solid #bbb; }
.pos { width: 70px; text-align: center; }
.time { width: 71px; text-align: center; }
.mem { width: 76px; height: 7px; line-height: 7px; background: #ece8a6; text-align: center; padding-left: 18px; border-right: 1px solid #bbb; }
.trash { padding-left: 16px; }
.trash svg { width: 7px; height: 7px; }

.callouts { position: absolute; left: 0; top: 0; width: 1024px; height: 606px; }
.label text { font: bold 24px Lato, Carlito, sans-serif; font-variant-ligatures: none; fill: #000; }
.label .big { font-size: 26px; }
```
FILE: labels.js
```js
// Stretch fixed-length chart and callout labels by glyph rather than by spacing.
document.querySelectorAll('text[textLength]').forEach(function (t) {
  t.setAttribute('lengthAdjust', 'spacingAndGlyphs');
});
```
